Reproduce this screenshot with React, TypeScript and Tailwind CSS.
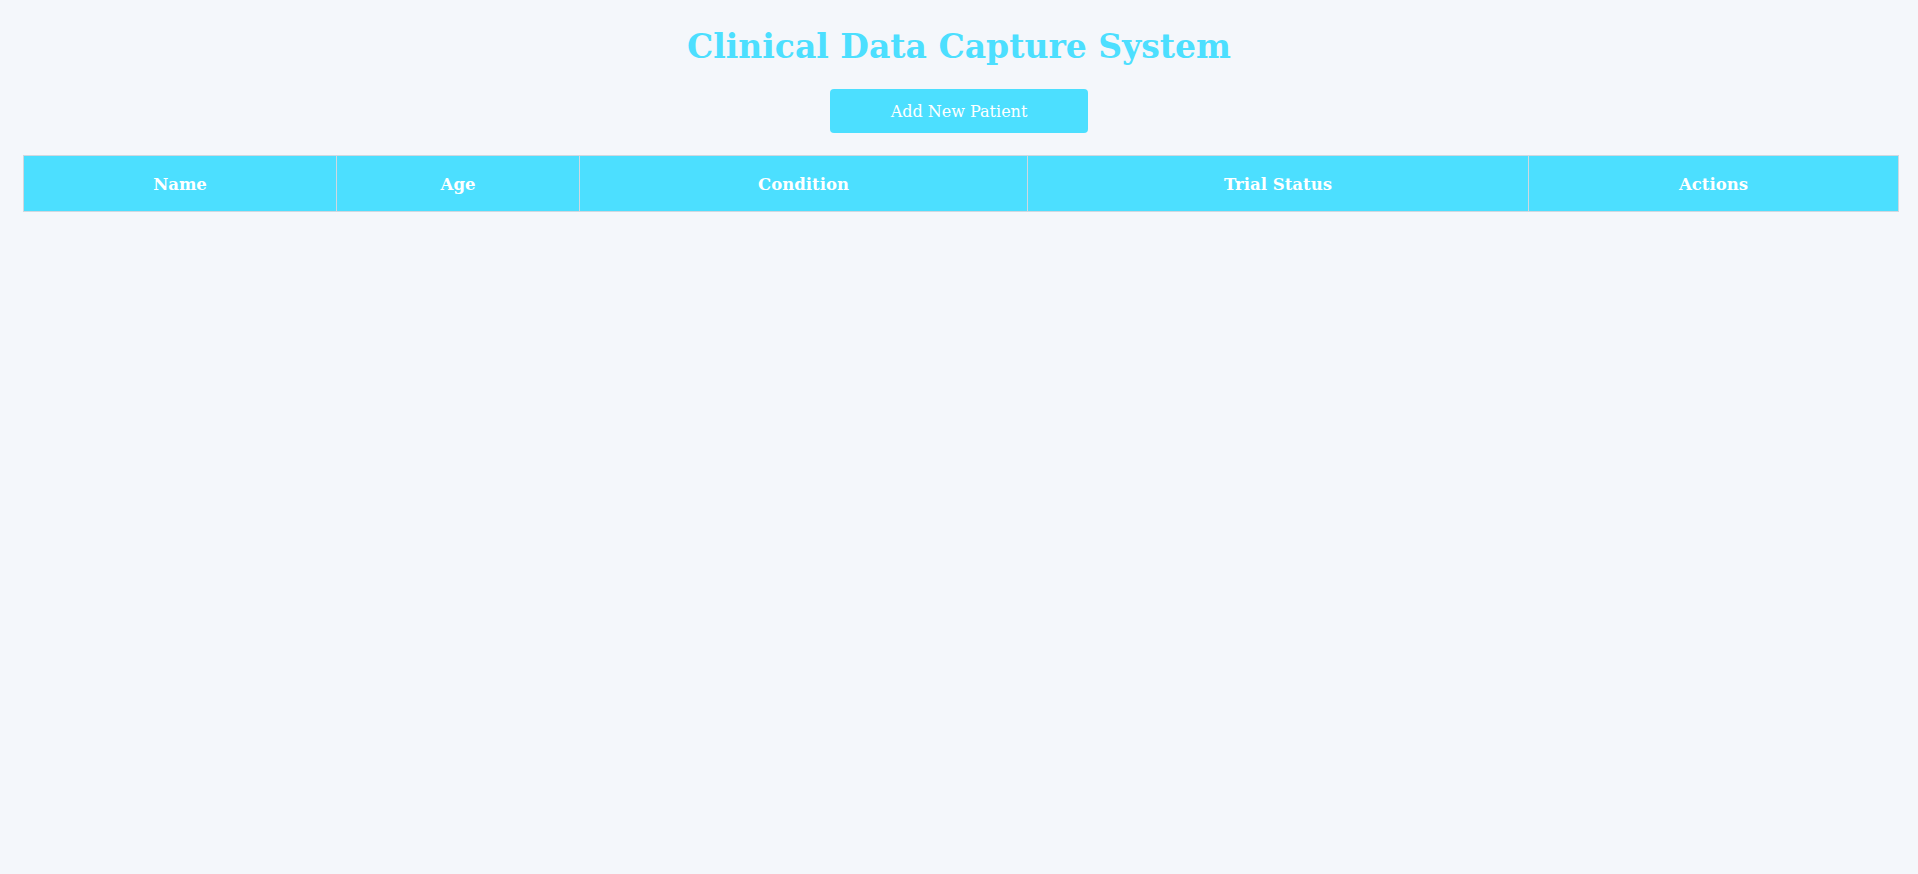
export default function App() {
  const cols = [
    { label: "Name", w: "w-[313px]" },
    { label: "Age", w: "w-[243px]" },
    { label: "Condition", w: "w-[448px]" },
    { label: "Trial Status", w: "w-[501px]" },
    { label: "Actions", w: "w-[370px]" },
  ];

  return (
    <main className="min-h-[874px] bg-[#f4f7fb] px-[23px] pt-[27px] font-['DejaVu_Serif',serif]">
      <div className="flex flex-col items-center">
        <h1 className="text-[33px] font-bold leading-[40px] text-[#4cdfff]">
          Clinical Data Capture System
        </h1>
        <button className="mt-[22px] h-[44px] w-[258px] rounded-[4px] bg-[#4cdfff] pt-[1px] text-[16px] text-white">
          Add New Patient
        </button>
      </div>

      <table className="mt-[22px] w-[1875px] table-fixed border-collapse">
        <colgroup>
          {cols.map((c) => (
            <col key={c.label} className={c.w} />
          ))}
        </colgroup>
        <thead>
          <tr className="bg-[#4cdfff]">
            {cols.map((c) => (
              <th
                key={c.label}
                className="h-[56px] border border-[#cfd8e0] pt-[3px] text-[16.5px] font-bold text-white"
              >
                {c.label}
              </th>
            ))}
          </tr>
        </thead>
        <tbody></tbody>
      </table>
    </main>
  );
}
